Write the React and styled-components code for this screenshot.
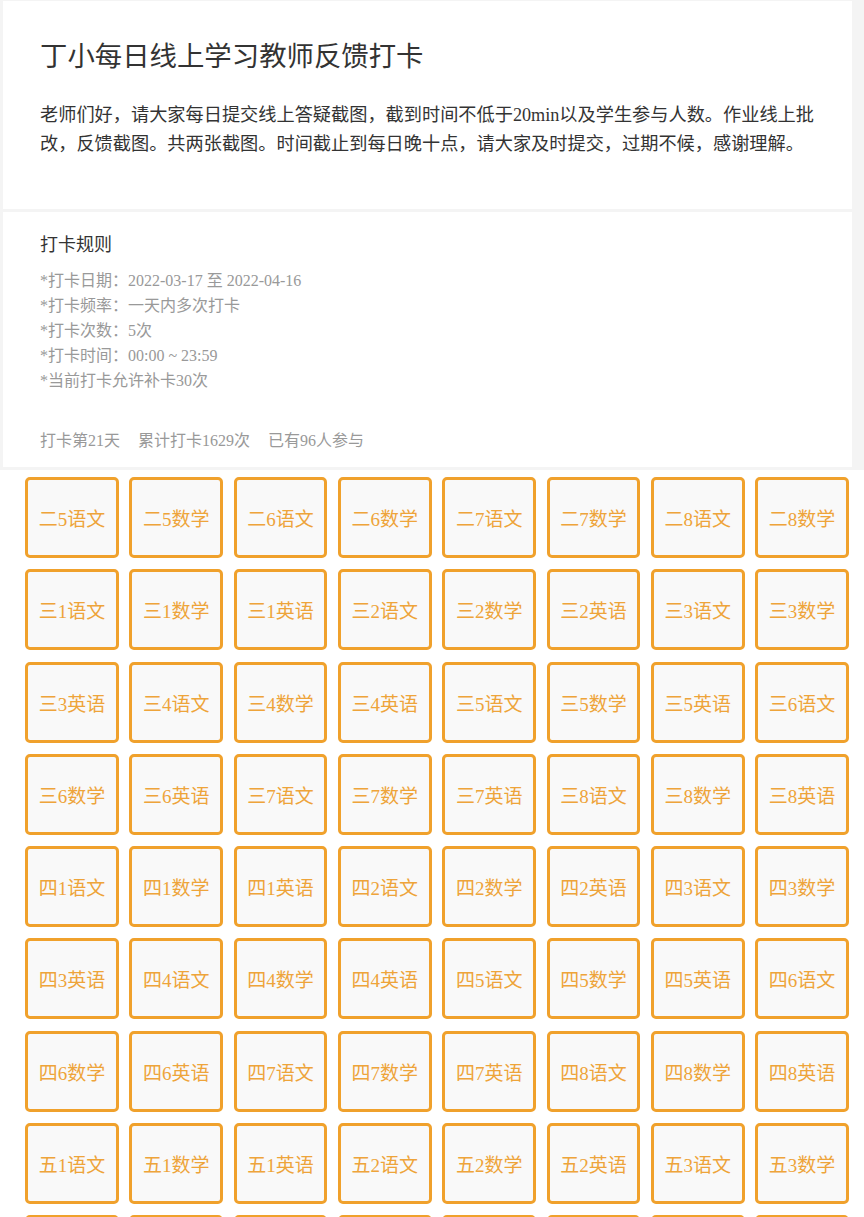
import React from 'react'
import styled, { createGlobalStyle } from 'styled-components'

const GlobalStyle = createGlobalStyle`
    body {
        margin: 0;
        background: #ffffff;
        font-family: "Liberation Serif", "Noto Sans CJK SC", serif;
    }
`

const Header = styled.div`
    background: #f4f4f4;
    padding: 1px 12px 3px 3px;
    display: flex;
    flex-direction: column;
    gap: 3px;
`

const Card = styled.div`
    background: #fff;
    padding: ${p => p.$pad};
`

const Title = styled.h1`
    margin: 0 0 25px;
    font-size: 27.4px;
    line-height: 38px;
    font-weight: 400;
    color: #333;
`

const Desc = styled.p`
    margin: 0;
    font-size: 18.2px;
    line-height: 29px;
    color: #333;
`

const RuleTitle = styled.h2`
    margin: 0 0 11px;
    font-size: 18px;
    line-height: 24px;
    font-weight: 400;
    color: #333;
`

const Rules = styled.div`
    display: flex;
    flex-direction: column;
`

const Rule = styled.div`
    font-size: 16px;
    line-height: 25px;
    color: #999;
`

const Stats = styled.div`
    margin-top: 35px;
    display: flex;
    gap: 18px;
    font-size: 16px;
    line-height: 25px;
    color: #999;
`

const Grid = styled.div`
    background: #fff;
    padding: 7px 15px 20px 25px;
    display: grid;
    grid-template-columns: repeat(8, 1fr);
    column-gap: 10.5px;
    row-gap: 11.3px;
`

const Cell = styled.div`
    height: 81px;
    box-sizing: border-box;
    border: 3px solid #f0a12c;
    border-radius: 5px;
    background: #f9f9f9;
    display: flex;
    align-items: center;
    justify-content: center;
    font-size: 19px;
    color: #eea43a;
    white-space: nowrap;
`

const rules = [
    '*打卡日期：2022-03-17 至 2022-04-16',
    '*打卡频率：一天内多次打卡',
    '*打卡次数：5次',
    '*打卡时间：00:00 ~ 23:59',
    '*当前打卡允许补卡30次',
]

const buildClasses = () => {
    const list = []
    for (let c = 5; c <= 8; c++) {
        list.push(`二${c}语文`, `二${c}数学`)
    }
    ;['三', '四', '五', '六'].forEach(g => {
        for (let c = 1; c <= 8; c++) {
            list.push(`${g}${c}语文`, `${g}${c}数学`, `${g}${c}英语`)
        }
    })
    return list
}

const classes = buildClasses()

const App = () => {
    return (
        <>
            <GlobalStyle />
            <Header>
                <Card $pad="37px 37px 50px">
                    <Title>丁小每日线上学习教师反馈打卡</Title>
                    <Desc>
                        老师们好，请大家每日提交线上答疑截图，截到时间不低于20min以及学生参与人数。作业线上批改，反馈截图。共两张截图。时间截止到每日晚十点，请大家及时提交，过期不候，感谢理解。
                    </Desc>
                </Card>
                <Card $pad="21px 37px 14px">
                    <RuleTitle>打卡规则</RuleTitle>
                    <Rules>
                        {rules.map(r => (
                            <Rule key={r}>{r}</Rule>
                        ))}
                    </Rules>
                    <Stats>
                        <span>打卡第21天</span>
                        <span>累计打卡1629次</span>
                        <span>已有96人参与</span>
                    </Stats>
                </Card>
            </Header>
            <Grid>
                {classes.map(name => (
                    <Cell key={name}>{name}</Cell>
                ))}
            </Grid>
        </>
    )
}

export default App
